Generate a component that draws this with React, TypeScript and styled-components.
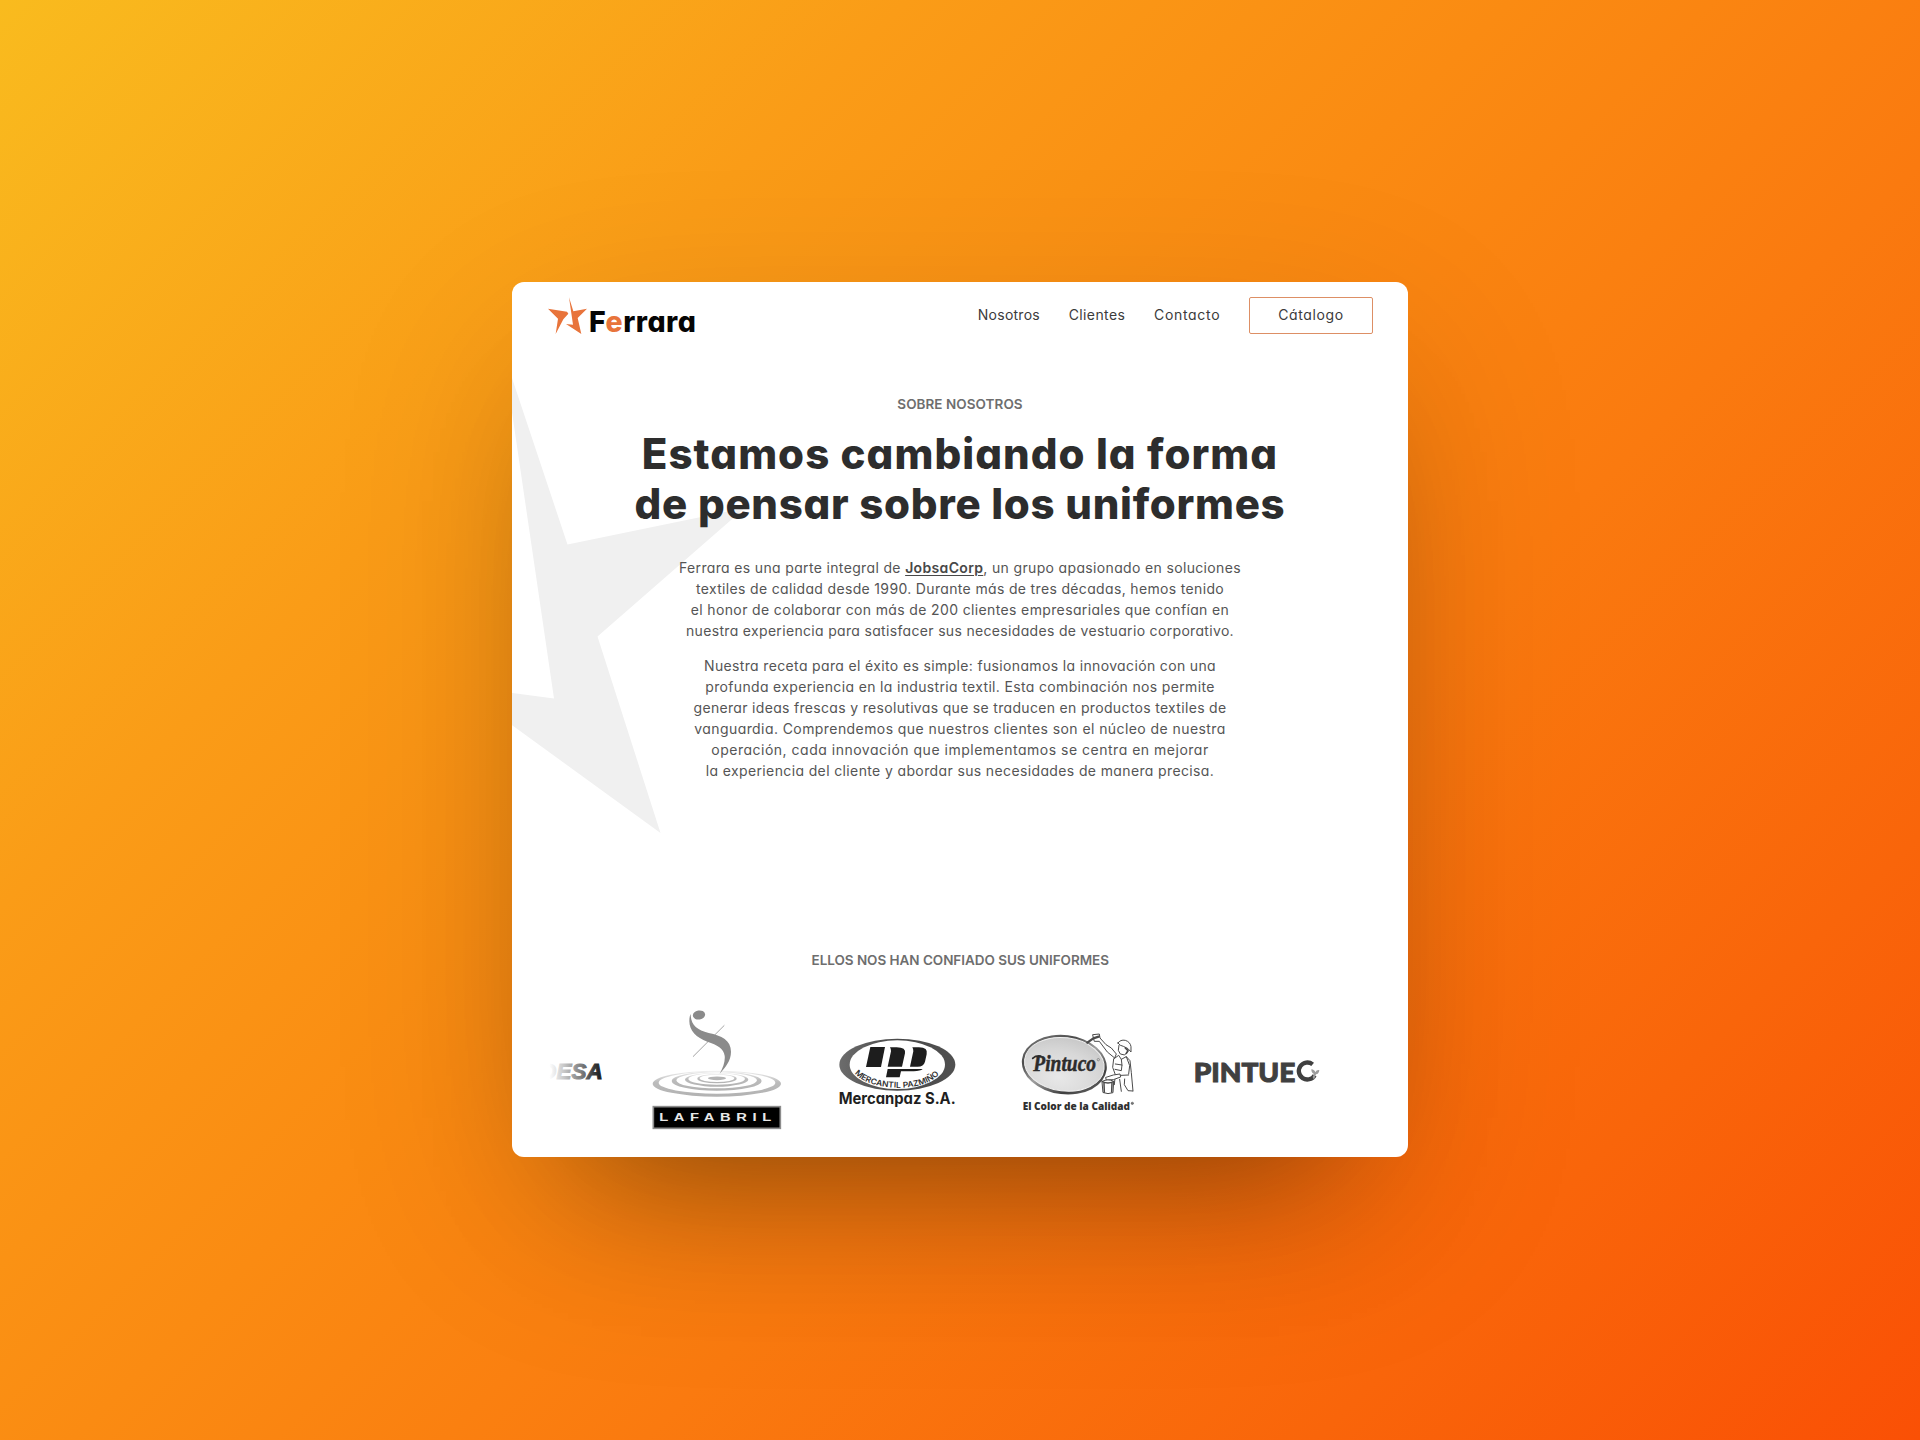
import React from "react";
import styled, { createGlobalStyle } from "styled-components";

const GlobalStyle = createGlobalStyle`
  body {
    margin: 0;
    font-family: Inter, "Open Sans", sans-serif;
    font-feature-settings: "cv11";
  }
`;

const Page = styled.div`
  box-sizing: border-box;
  width: 1920px;
  height: 1440px;
  padding: 282px 512px;
  overflow: hidden;
  background: linear-gradient(135deg, #f9bb1e 0%, #fa9c17 27%, #fa8b12 45%, #fa7a0f 62%, #f9650a 82%, #fa5005 100%);
`;

const CardShadow = styled.div`
  width: 896px;
  height: 875px;
  border-radius: 12px;
  box-shadow:
    0 90px 140px -80px rgba(0, 0, 0, 0.38),
    0 60px 200px -10px rgba(0, 0, 0, 0.14);
`;

const Card = styled.main`
  position: relative;
  box-sizing: border-box;
  width: 896px;
  height: 875px;
  overflow: hidden;
  border-radius: 12px;
  background: #fff;
`;

const Watermark = styled.svg`
  position: absolute;
  left: 0;
  top: 0;
  width: 240px;
  height: 560px;
`;

const Header = styled.header`
  position: relative;
  display: flex;
  justify-content: space-between;
  align-items: flex-start;
  padding: 14.5px 35px 0 35.5px;
`;

const Brand = styled.a`
  display: flex;
  align-items: flex-end;
  gap: 2.5px;
  height: 38px;
`;

const BrandStar = styled.svg`
  width: 39px;
  height: 38px;
`;

const Wordmark = styled.span`
  font-size: 28.5px;
  font-weight: 800;
  line-height: 27px;
  letter-spacing: 0.5px;
  color: #050505;
`;

const Accent = styled.span`
  color: #e8743b;
`;

const Nav = styled.nav`
  display: flex;
  align-items: center;
`;

const NavLink = styled.a<{ $track: number }>`
  margin-right: 28.7px;
  padding-bottom: 1.5px;
  font-size: 14px;
  line-height: 21px;
  letter-spacing: ${(p) => p.$track}px;
  color: #3b3b3b;
`;

const CatalogButton = styled.a`
  box-sizing: border-box;
  width: 124px;
  height: 37px;
  border: 1px solid #dd8f65;
  border-radius: 2px;
  font-size: 14px;
  line-height: 34px;
  letter-spacing: 0.6px;
  text-align: center;
  color: #3b3b3b;
`;

const About = styled.section`
  position: relative;
  display: flex;
  flex-direction: column;
  align-items: center;
  padding-top: 59.4px;
  text-align: center;
`;

const Eyebrow = styled.h2<{ $track: number }>`
  margin: 0;
  font-size: 13.5px;
  font-weight: 600;
  line-height: 21px;
  letter-spacing: ${(p) => p.$track}px;
  color: #6e6e6e;
`;

const Title = styled.h1`
  margin: 14px 0 0;
  font-size: 42px;
  font-weight: 800;
  line-height: 50.4px;
  color: #2d2d2d;
`;

const Copy = styled.div`
  display: flex;
  flex-direction: column;
  gap: 14px;
  margin-top: 27.4px;
`;

const Paragraph = styled.p`
  margin: 0;
  font-size: 14px;
  line-height: 21px;
  color: #555;
`;

const Line = styled.span<{ $track: number }>`
  display: block;
  white-space: nowrap;
  letter-spacing: ${(p) => p.$track}px;
`;

const CorpLink = styled.a`
  font-weight: 600;
  text-decoration: underline;
  text-underline-offset: 2px;
  color: #484848;
`;

const Clients = styled.section`
  position: relative;
  display: flex;
  flex-direction: column;
  gap: 37px;
  padding: 168.5px 35.5px 0 36px;
  text-align: center;
`;

const LogoStrip = styled.div`
  display: flex;
  align-items: center;
`;

const Logo = styled.svg<{ $w: number; $h: number; $before?: number }>`
  flex: none;
  display: block;
  width: ${(p) => p.$w}px;
  height: ${(p) => p.$h}px;
  margin-left: ${(p) => p.$before ?? 0}px;
`;

const titleLines = [
  { text: "Estamos cambiando la forma", track: 1.05 },
  { text: "de pensar sobre los uniformes", track: 0.71 },
];

const introLines = [
  { text: "textiles de calidad desde 1990. Durante más de tres décadas, hemos tenido", track: 0.34 },
  { text: "el honor de colaborar con más de 200 clientes empresariales que confían en", track: 0.365 },
  { text: "nuestra experiencia para satisfacer sus necesidades de vestuario corporativo.", track: 0.326 },
];

const recipeLines = [
  { text: "Nuestra receta para el éxito es simple: fusionamos la innovación con una", track: 0.353 },
  { text: "profunda experiencia en la industria textil. Esta combinación nos permite", track: 0.341 },
  { text: "generar ideas frescas y resolutivas que se traducen en productos textiles de", track: 0.32 },
  { text: "vanguardia. Comprendemos que nuestros clientes son el núcleo de nuestra", track: 0.423 },
  { text: "operación, cada innovación que implementamos se centra en mejorar", track: 0.506 },
  { text: "la experiencia del cliente y abordar sus necesidades de manera precisa.", track: 0.371 },
];

function DesaLogo() {
  return (
    <Logo $w={56.67} $h={21.33} viewBox="54 391 170 64">
      <defs>
        <linearGradient id="desa" gradientUnits="userSpaceOnUse" x1="58" y1="0" x2="214" y2="0">
          <stop offset="0" stopColor="#fff" />
          <stop offset="0.3" stopColor="#c4c4c4" />
          <stop offset="0.65" stopColor="#757575" />
          <stop offset="0.85" stopColor="#3c3c3c" />
          <stop offset="1" stopColor="#1c1c1c" />
        </linearGradient>
      </defs>
      <text x="31" y="446" fontFamily="Liberation Sans, sans-serif" fontWeight="700" fontStyle="italic" fontSize="68" textLength="187" lengthAdjust="spacingAndGlyphs" fill="url(#desa)" stroke="url(#desa)" strokeWidth="3">DESA</text>
    </Logo>
  );
}

function LafabrilLogo() {
  return (
    <Logo $w={133.33} $h={128.67} $before={45.3} viewBox="360 231 400 386">
      <defs>
        <linearGradient id="ripple" x1="0" y1="0" x2="0" y2="1">
          <stop offset="0" stopColor="#f0f0f0" />
          <stop offset="0.45" stopColor="#bcbcbc" />
          <stop offset="1" stopColor="#b2b2b2" />
        </linearGradient>
      </defs>
      <path fillRule="evenodd" fill="url(#ripple)" d="M368 458a192.500 39 0 1 0 385 0a192.500 39 0 1 0-385 0zM386 455a175 33 0 1 0 350 0a175 33 0 1 0-350 0z" />
      <path fillRule="evenodd" fill="url(#ripple)" d="M425 450a135 29 0 1 0 270 0a135 29 0 1 0-270 0zM439 448a121 24 0 1 0 242 0a121 24 0 1 0-242 0z" />
      <path fillRule="evenodd" fill="url(#ripple)" d="M465 446a95 21 0 1 0 190 0a95 21 0 1 0-190 0zM475 444a85 17 0 1 0 170 0a85 17 0 1 0-170 0z" />
      <path fillRule="evenodd" fill="url(#ripple)" d="M502 443a59 14 0 1 0 118 0a59 14 0 1 0-118 0zM509 442a52 11 0 1 0 104 0a52 11 0 1 0-104 0z" />
      <ellipse cx="561" cy="442" rx="27" ry="5.500" fill="#b4b4b4" />
      <path d="M489 377L583 283" stroke="#909090" strokeWidth="2.500" />
      <ellipse cx="507" cy="252" rx="18.500" ry="13.500" fill="#8b8b8b" transform="rotate(-10 507 252)" />
      <path d="M482 249C482 281 500 297 536 306C575 314 603 328 603 362C603 389 587 408 569 428C580 409 586 390 584 374C581 352 562 342 532 332C499 320 478 299 478 270C478 262 479 254 482 249Z" fill="#8b8b8b" />
      <rect x="370" y="527" width="381" height="65" fill="#000" stroke="#8c8c8c" strokeWidth="5" />
      <text x="298" y="571" transform="scale(1.3 1)" fontFamily="Liberation Sans, sans-serif" fontWeight="700" fontSize="34" textLength="259" fill="#e8e8e8">LAFABRIL</text>
    </Logo>
  );
}

function MercanpazLogo() {
  return (
    <Logo $w={121.67} $h={73.33} $before={53.4} viewBox="110 313 365 220">
      <defs>
        <path id="merc-arc" d="M163 428C207 483 375 488 418 428" />
        <linearGradient id="merc-ring" x1="0" y1="0" x2="1" y2="0">
          <stop offset="0" stopColor="#6c6c6c" />
          <stop offset="0.5" stopColor="#4a4a4a" />
          <stop offset="1" stopColor="#505050" />
        </linearGradient>
      </defs>
      <ellipse cx="291" cy="402" rx="174" ry="78" fill="url(#merc-ring)" />
      <ellipse cx="291" cy="402" rx="143" ry="73" fill="#fff" />
      <path fill="#1d1d1d" d="M210 349H254L242 409H197Z" />
      <path fill="#1d1d1d" d="M270 350H289Q318 350 314 368L305 408H262L272 362Q272 354 269 350Z" />
      <path fill="#1d1d1d" d="M336 350H356Q384 350 379 371L374 393Q370 408 352 408H329L339 362Q339 354 336 350Z" />
      <path fill="#1d1d1d" d="M262 415H367Q361 421 340 422H302L298 440H257Z" />
      <text fontFamily="Inter, sans-serif" fontSize="24" fontWeight="600" fill="#303030">
        <textPath href="#merc-arc" textLength="274" lengthAdjust="spacingAndGlyphs">MERCANTIL PAZMIÑO</textPath>
      </text>
      <text x="115" y="520" fontFamily="Inter, sans-serif" fontWeight="700" fontSize="46" textLength="351" lengthAdjust="spacingAndGlyphs" fill="#1f1f1f">Mercanpaz S.A.</text>
    </Logo>
  );
}

function PintucoLogo() {
  return (
    <Logo $w={116.67} $h={83.33} $before={61.6} viewBox="60 58 350 250">
      <defs>
        <linearGradient id="pin-rim" x1="0" y1="0" x2="1" y2="1">
          <stop offset="0" stopColor="#8a8a8a" />
          <stop offset="0.3" stopColor="#4a4a4a" />
          <stop offset="0.5" stopColor="#a0a0a0" />
          <stop offset="0.75" stopColor="#3f3f3f" />
          <stop offset="1" stopColor="#7a7a7a" />
        </linearGradient>
        <radialGradient id="pin-face" cx="0.45" cy="0.75" r="0.8">
          <stop offset="0" stopColor="#e8e8e8" />
          <stop offset="0.6" stopColor="#d8d8d8" />
          <stop offset="1" stopColor="#c6c6c6" />
        </radialGradient>
      </defs>
      <ellipse cx="193" cy="162" rx="128" ry="89" fill="url(#pin-rim)" transform="rotate(7 193 162)" />
      <ellipse cx="193" cy="161" rx="120" ry="80" fill="url(#pin-face)" stroke="#f1f1f1" strokeWidth="3" transform="rotate(7 193 161)" />
      <text x="100" y="181" fontFamily="Liberation Serif, serif" fontWeight="700" fontStyle="italic" fontSize="68" textLength="188" lengthAdjust="spacingAndGlyphs" fill="#2c2c2c" stroke="#2c2c2c" strokeWidth="1.500">Pintuco</text>
      <path d="M98 143Q106 134 122 136" fill="none" stroke="#2c2c2c" strokeWidth="5" strokeLinecap="round" />
      <circle cx="295" cy="147" r="3.500" fill="none" stroke="#555" strokeWidth="1.500" />
      <g fill="none" stroke="#4a4a4a" strokeWidth="3" strokeLinecap="round" strokeLinejoin="round">
        <path d="M279 72L298 70L300 82L318 102L334 112L349 130L344 142L322 124L298 92L284 92Z" fill="#fff" />
        <path d="M262 96L280 83L296 78" strokeWidth="7" />
        <path d="M354 97Q361 86 376 89Q391 94 393 108L393 124Q386 112 370 107Q360 106 354 97Z" fill="#fff" />
        <path d="M357 104L355 119L361 130L374 133L384 122" />
        <path d="M341 145L356 134L364 146L379 138L390 150L394 186L399 241M341 145L338 170L346 192L343 222M379 138L389 165L386 190" />
        <path d="M346 160L366 163L364 180L345 176M364 146L366 163M344 195L386 193M359 206L364 242M374 205L373 222L384 240L398 241" />
        <path d="M376 112L384 120L379 128" strokeWidth="5" />
        <path d="M318 200L340 193L360 190L362 199L340 207L320 208Z" fill="#fff" />
        <path d="M307 212Q324 203 341 212L339 246Q324 252 310 246Z" fill="#fff" />
        <path d="M307 213Q324 221 341 213M312 218L313 245M336 218L335 244" strokeWidth="4.500" />
      </g>
      <text x="68" y="299" fontFamily="Open Sans, sans-serif" fontWeight="800" fontSize="29" textLength="322" lengthAdjust="spacingAndGlyphs" fill="#2f2f2f">El Color de la Calidad</text>
      <circle cx="397" cy="278" r="3.500" fill="#777" stroke="#444" strokeWidth="1.500" />
    </Logo>
  );
}

function PintuecoLogo() {
  return (
    <Logo $w={128.33} $h={25.33} $before={56.6} viewBox="100 145 385 76">
      <text x="102" y="213" fontFamily="Lato, sans-serif" fontWeight="900" fontSize="82" textLength="305" lengthAdjust="spacingAndGlyphs" fill="#404040" stroke="#404040" strokeWidth="3">PINTUE</text>
      <path d="M459 161A25.500 25.500 0 1 0 465 194" fill="none" stroke="#404040" strokeWidth="13" />
      <path d="M455 176Q465 177 467 185Q470 177 479 178Q478 190 469 191L463 207L459 199L463 190Q455 187 455 176Z" fill="#9c9c9c" />
    </Logo>
  );
}

export default function App() {
  return (
    <Page>
      <GlobalStyle />
      <CardShadow>
        <Card>
          <Watermark viewBox="0 0 240 560">
            <path d="M-9 69L55.500 262.500L232.800 226L85.500 354.500L148.500 551L0.500 443.500L-60 399.500L0.500 411L42 416.500Z" fill="#f0f0f0" />
          </Watermark>
          <Header>
            <Brand>
              <BrandStar viewBox="23 21 117 114">
                <path d="M86 22L99 64L140 56L112 84L123 132L77 102L98 104Z" fill="#e8743b" />
                <path d="M23 56L80 65L84 71L69 88L46 132L53 86Z" fill="#e8743b" />
              </BrandStar>
              <Wordmark>F<Accent>e</Accent>rrara</Wordmark>
            </Brand>
            <Nav>
              <NavLink $track={0.25}>Nosotros</NavLink>
              <NavLink $track={0.4}>Clientes</NavLink>
              <NavLink $track={0.7}>Contacto</NavLink>
              <CatalogButton>Cátalogo</CatalogButton>
            </Nav>
          </Header>
          <About>
            <Eyebrow $track={0.05}>SOBRE NOSOTROS</Eyebrow>
            <Title>
              {titleLines.map((l) => (
                <Line key={l.text} $track={l.track}>{l.text}</Line>
              ))}
            </Title>
            <Copy>
              <Paragraph>
                <Line $track={0.345}>
                  Ferrara es una parte integral de <CorpLink>JobsaCorp</CorpLink>, un grupo apasionado en soluciones
                </Line>
                {introLines.map((l) => (
                  <Line key={l.text} $track={l.track}>{l.text}</Line>
                ))}
              </Paragraph>
              <Paragraph>
                {recipeLines.map((l) => (
                  <Line key={l.text} $track={l.track}>{l.text}</Line>
                ))}
              </Paragraph>
            </Copy>
          </About>
          <Clients>
            <Eyebrow $track={-0.04}>ELLOS NOS HAN CONFIADO SUS UNIFORMES</Eyebrow>
            <LogoStrip>
              <DesaLogo />
              <LafabrilLogo />
              <MercanpazLogo />
              <PintucoLogo />
              <PintuecoLogo />
            </LogoStrip>
          </Clients>
        </Card>
      </CardShadow>
    </Page>
  );
}
